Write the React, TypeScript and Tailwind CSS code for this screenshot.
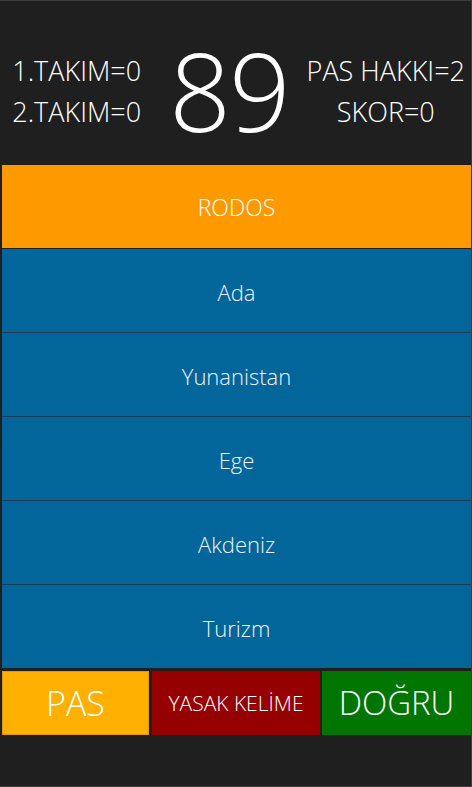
const words = ['Ada', 'Yunanistan', 'Ege', 'Akdeniz', 'Turizm']

export default function App() {
  return (
    <div
      className="flex h-[787px] w-[472px] flex-col border-t border-r border-b border-[#3c3c3c] bg-[#1f1f1f] pl-[2px] text-white"
      style={{ fontFamily: '"Open Sans", "Noto Sans", sans-serif' }}
    >
      <div className="flex h-[164px] items-center pt-[16px]">
        <div className="flex w-[152px] flex-col items-center gap-[4px] text-[27px] leading-[37px] font-light">
          <span>1.TAKIM=0</span>
          <span>2.TAKIM=0</span>
        </div>
        <div className="flex w-[158px] justify-center text-[108px] leading-none font-light tracking-[-2px]">
          89
        </div>
        <div className="flex flex-1 flex-col items-center gap-[4px] pr-[6px] text-[27px] leading-[37px] font-light whitespace-nowrap">
          <span>PAS HAKKI=2</span>
          <span>SKOR=0</span>
        </div>
      </div>

      <div className="flex h-[83px] items-center justify-center bg-[#ff9900] pt-[2px] text-[23px] font-light">RODOS</div>

      <div className="mt-px flex flex-col gap-px bg-[#1d3d52]">
        {words.map((w) => (
          <div key={w} className="flex h-[83px] items-center justify-center bg-[#02669a] pt-[3px] text-[22px] font-light text-[#eef3f7]">
            {w}
          </div>
        ))}
      </div>

      <div className="mt-[3px] flex h-[64px] gap-[2px]">
        <button className="flex w-[147px] items-center justify-center border border-[#e09a00] bg-[#ffb000] text-[34px] font-light">
          PAS
        </button>
        <button className="ml-px flex w-[168px] items-center justify-center bg-[#950000] pt-[2px] text-[21px] font-light">
          YASAK KELİME
        </button>
        <button className="flex flex-1 items-center justify-center bg-[#007500] text-[33px] font-light">
          DOĞRU
        </button>
      </div>
    </div>
  )
}
